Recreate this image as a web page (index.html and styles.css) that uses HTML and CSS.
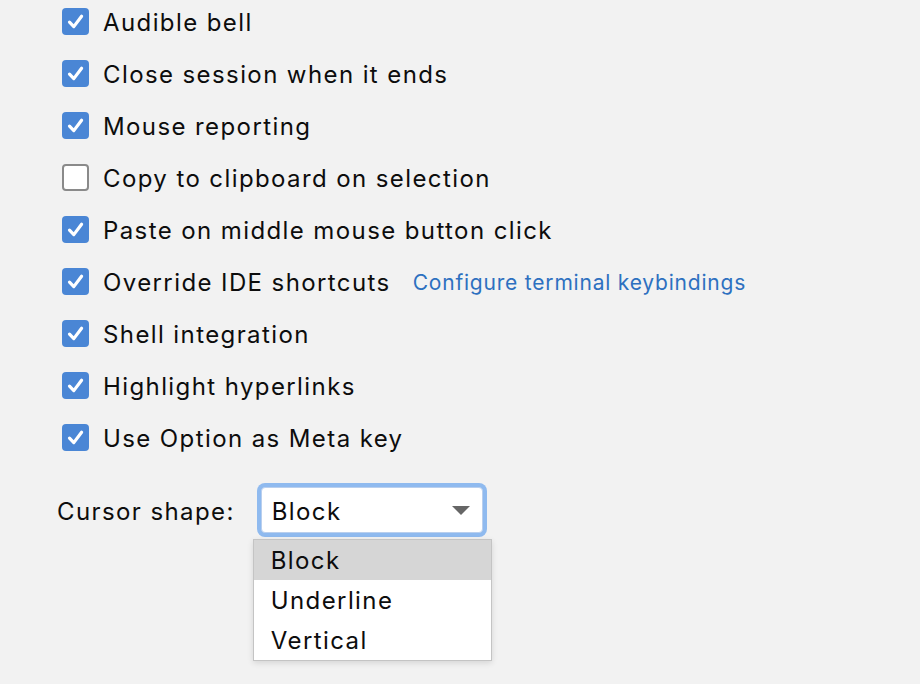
FILE: index.html
```html
<!DOCTYPE html>
<html>
<head>
<meta charset="utf-8">
<link rel="stylesheet" href="styles.css">
</head>
<body>
<div class="panel">
  <div class="opts">
    <label class="row"><span class="cb on"><svg viewBox="0 0 27 27"><path d="M7.5 14.2 L11.8 18.6 L19.6 8.2" /></svg></span><span class="txt">Audible bell</span></label>
    <label class="row"><span class="cb on"><svg viewBox="0 0 27 27"><path d="M7.5 14.2 L11.8 18.6 L19.6 8.2" /></svg></span><span class="txt">Close session when it ends</span></label>
    <label class="row"><span class="cb on"><svg viewBox="0 0 27 27"><path d="M7.5 14.2 L11.8 18.6 L19.6 8.2" /></svg></span><span class="txt">Mouse reporting</span></label>
    <label class="row"><span class="cb off"></span><span class="txt">Copy to clipboard on selection</span></label>
    <label class="row"><span class="cb on"><svg viewBox="0 0 27 27"><path d="M7.5 14.2 L11.8 18.6 L19.6 8.2" /></svg></span><span class="txt">Paste on middle mouse button click</span></label>
    <div class="row"><span class="cb on"><svg viewBox="0 0 27 27"><path d="M7.5 14.2 L11.8 18.6 L19.6 8.2" /></svg></span><span class="txt">Override IDE shortcuts</span><a class="link">Configure terminal keybindings</a></div>
    <label class="row"><span class="cb on"><svg viewBox="0 0 27 27"><path d="M7.5 14.2 L11.8 18.6 L19.6 8.2" /></svg></span><span class="txt">Shell integration</span></label>
    <label class="row"><span class="cb on"><svg viewBox="0 0 27 27"><path d="M7.5 14.2 L11.8 18.6 L19.6 8.2" /></svg></span><span class="txt">Highlight hyperlinks</span></label>
    <label class="row"><span class="cb on"><svg viewBox="0 0 27 27"><path d="M7.5 14.2 L11.8 18.6 L19.6 8.2" /></svg></span><span class="txt">Use Option as Meta key</span></label>
  </div>
  <div class="cursor-row">
    <span class="txt">Cursor shape:</span>
    <div class="select">
      <span class="val">Block</span>
      <svg class="arrow" viewBox="0 0 18 9"><path d="M0 0 H18 L9 9 Z"/></svg>
      <div class="popup">
        <div class="item sel">Block</div>
        <div class="item">Underline</div>
        <div class="item">Vertical</div>
      </div>
    </div>
  </div>
</div>
</body>
</html>
```

FILE: styles.css
```css
html, body {
  margin: 0;
  padding: 0;
  background: #f2f2f2;
  width: 920px;
  height: 684px;
  overflow: hidden;
  font-family: "Inter", "Liberation Sans", sans-serif;
  color: #0d0d0d;
}
.panel {
  padding-top: 8px;
}
.opts {
  padding-left: 62px;
  display: flex;
  flex-direction: column;
  gap: 25px;
}
.row {
  display: flex;
  align-items: center;
  height: 27px;
}
.cb {
  width: 27px;
  height: 27px;
  box-sizing: border-box;
  border-radius: 4px;
  margin-right: 14px;
  flex: none;
  display: flex;
}
.cb.on {
  background: #4a86d5;
}
.cb.off {
  background: #ffffff;
  border: 2px solid #8a8a8a;
}
.cb svg {
  width: 27px;
  height: 27px;
}
.cb svg path {
  fill: none;
  stroke: #ffffff;
  stroke-width: 3.2;
  stroke-linecap: round;
  stroke-linejoin: round;
}
.txt {
  font-size: 24px;
  letter-spacing: 1.4px;
  white-space: nowrap;
  padding-top: 2px;
}
.link {
  margin-left: 22px;
  font-size: 21px;
  color: #2d70c0;
  letter-spacing: 0.8px;
  white-space: nowrap;
  padding-top: 2px;
}
.cursor-row {
  display: flex;
  align-items: center;
  margin-top: 36px;
  padding-left: 57px;
}
.select {
  position: relative;
  margin-left: 26px;
  width: 222px;
  height: 46px;
  box-sizing: border-box;
  background: #ffffff;
  border: 1px solid #b9cfee;
  border-radius: 4px;
  box-shadow: 0 0 0 4px #8fbaef;
  display: flex;
  align-items: center;
  padding-left: 10px;
}
.val {
  font-size: 24px;
  letter-spacing: 1.4px;
  flex: 1;
  padding-top: 2px;
}
.arrow {
  width: 18px;
  height: 9px;
  margin-right: 12px;
  fill: #666666;
}
.popup {
  position: absolute;
  left: -9px;
  top: 51px;
  width: 239px;
  box-sizing: border-box;
  background: #ffffff;
  border: 1px solid #c4c4c4;
  box-shadow: 0 2px 6px rgba(0,0,0,0.12);
}
.item {
  height: 40px;
  line-height: 42px;
  padding-left: 17px;
  font-size: 24px;
  letter-spacing: 1.4px;
}
.item.sel {
  background: #d6d6d6;
}
```
